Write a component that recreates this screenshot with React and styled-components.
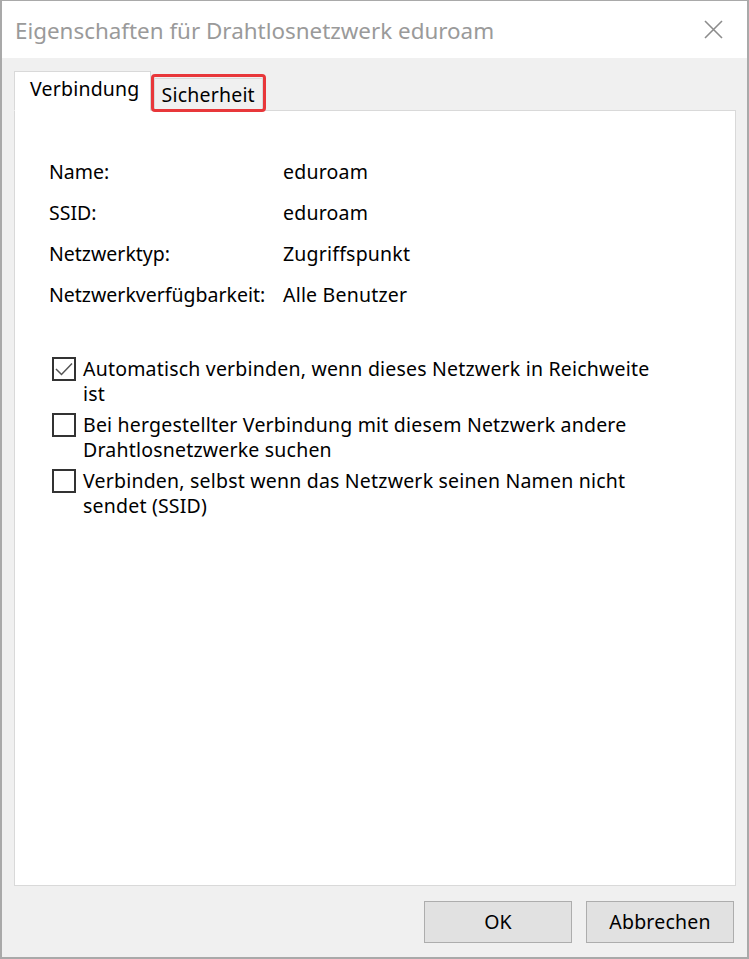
import React from "react";
import styled, { createGlobalStyle } from "styled-components";

const Global = createGlobalStyle`
  html, body { margin: 0; padding: 0; background: #ffffff; }
  body { font-family: "Noto Sans", "Open Sans", sans-serif; }
  * { box-sizing: border-box; }
`;

const Window = styled.div`
  width: 749px;
  height: 959px;
  display: flex;
  flex-direction: column;
  border-top: 1px solid #a9a9a9;
  border-left: 2px solid #a9a9a9;
  border-right: 2px solid #a9a9a9;
  border-bottom: 2px solid #a9a9a9;
  background: #f0f0f0;
`;

const TitleBar = styled.div`
  height: 57px;
  flex: none;
  background: #ffffff;
  display: flex;
  align-items: center;
  justify-content: space-between;
  padding: 0 24px 0 13px;
`;

const Title = styled.div`
  font-size: 22.4px;
  color: #9a9a9a;
  padding-top: 2px;
`;

const CloseIcon = styled.svg`
  width: 19px;
  height: 19px;
  display: block;
  margin-bottom: 1px;
`;

const Body = styled.div`
  flex: 1;
  display: flex;
  flex-direction: column;
  padding: 13px 11px 14px 12px;
  font-size: 19.5px;
  letter-spacing: 0.2px;
  color: #000;
`;

const TabStrip = styled.div`
  display: flex;
  align-items: flex-end;
  height: 40px;
  flex: none;
  position: relative;
  z-index: 1;
  margin-bottom: -1px;
`;

const Tab = styled.div`
  display: flex;
  align-items: center;
  background: ${(p) => (p.$active ? "#ffffff" : "#f0f0f0")};
  border: 1px solid #d9d9d9;
  border-bottom: ${(p) => (p.$active ? "1px solid #ffffff" : "1px solid #d9d9d9")};
  height: ${(p) => (p.$active ? "40px" : "33px")};
  padding: ${(p) => (p.$active ? "0 10px 5px 15px" : "0 7px 1px 7px")};
  margin-left: ${(p) => (p.$active ? "0" : "3px")};
  position: relative;
`;

const Highlight = styled.span`
  position: absolute;
  left: -4px;
  right: -4px;
  top: -5px;
  bottom: -2px;
  border: 3px solid #e8373a;
  border-radius: 4px;
  pointer-events: none;
`;

const Panel = styled.div`
  flex: 1;
  background: #ffffff;
  border: 1px solid #d9d9d9;
  padding: 40px 20px 0 34px;
`;

const InfoGrid = styled.div`
  display: grid;
  grid-template-columns: 234px 1fr;
  grid-auto-rows: 41px;
  align-items: center;
`;

const Label = styled.span`
  letter-spacing: 0;
`;

const CheckList = styled.div`
  display: flex;
  flex-direction: column;
  gap: 6px;
  margin-top: 41px;
  padding-left: 3px;
`;

const CheckRow = styled.label`
  display: flex;
  align-items: flex-start;
  gap: 7px;
  line-height: 25px;
`;

const Box = styled.span`
  flex: none;
  width: 24px;
  height: 24px;
  margin-top: 1px;
  border: 2px solid #333333;
  background: #ffffff;
  display: flex;
  align-items: center;
  justify-content: center;
`;

const CheckText = styled.span`
  white-space: nowrap;
`;

const ButtonRow = styled.div`
  display: flex;
  justify-content: flex-end;
  gap: 14px;
  padding: 15px 2px 0 0;
  flex: none;
`;

const Button = styled.button`
  width: 148px;
  height: 42px;
  background: #e1e1e1;
  border: 1px solid #adadad;
  font-family: inherit;
  font-size: 19.5px;
  letter-spacing: 0.2px;
  color: #000;
  padding: 0 0 2px 0;
`;

const rows = [
  ["Name:", "eduroam"],
  ["SSID:", "eduroam"],
  ["Netzwerktyp:", "Zugriffspunkt"],
  ["Netzwerkverfügbarkeit:", "Alle Benutzer"],
];

const checks = [
  { on: true, lines: ["Automatisch verbinden, wenn dieses Netzwerk in Reichweite", "ist"] },
  { on: false, lines: ["Bei hergestellter Verbindung mit diesem Netzwerk andere", "Drahtlosnetzwerke suchen"] },
  { on: false, lines: ["Verbinden, selbst wenn das Netzwerk seinen Namen nicht", "sendet (SSID)"] },
];

export default function App() {
  return (
    <>
      <Global />
      <Window>
        <TitleBar>
          <Title>Eigenschaften für Drahtlosnetzwerk eduroam</Title>
          <CloseIcon viewBox="0 0 19 19">
            <path d="M1 1 L18 18 M18 1 L1 18" stroke="#8c8c8c" strokeWidth="1.6" fill="none" />
          </CloseIcon>
        </TitleBar>
        <Body>
          <TabStrip>
            <Tab $active>Verbindung</Tab>
            <Tab>
              Sicherheit
              <Highlight />
            </Tab>
          </TabStrip>
          <Panel>
            <InfoGrid>
              {rows.map(([k, v]) => (
                <React.Fragment key={k}>
                  <Label>{k}</Label>
                  <span>{v}</span>
                </React.Fragment>
              ))}
            </InfoGrid>
            <CheckList>
              {checks.map((c, i) => (
                <CheckRow key={i}>
                  <Box>
                    {c.on && (
                      <svg width="18" height="14" viewBox="0 0 18 14">
                        <path d="M1 7 L6.5 12.5 L17 1.5" stroke="#555" strokeWidth="1.5" fill="none" />
                      </svg>
                    )}
                  </Box>
                  <CheckText>
                    {c.lines[0]}
                    <br />
                    {c.lines[1]}
                  </CheckText>
                </CheckRow>
              ))}
            </CheckList>
          </Panel>
          <ButtonRow>
            <Button>OK</Button>
            <Button>Abbrechen</Button>
          </ButtonRow>
        </Body>
      </Window>
    </>
  );
}
